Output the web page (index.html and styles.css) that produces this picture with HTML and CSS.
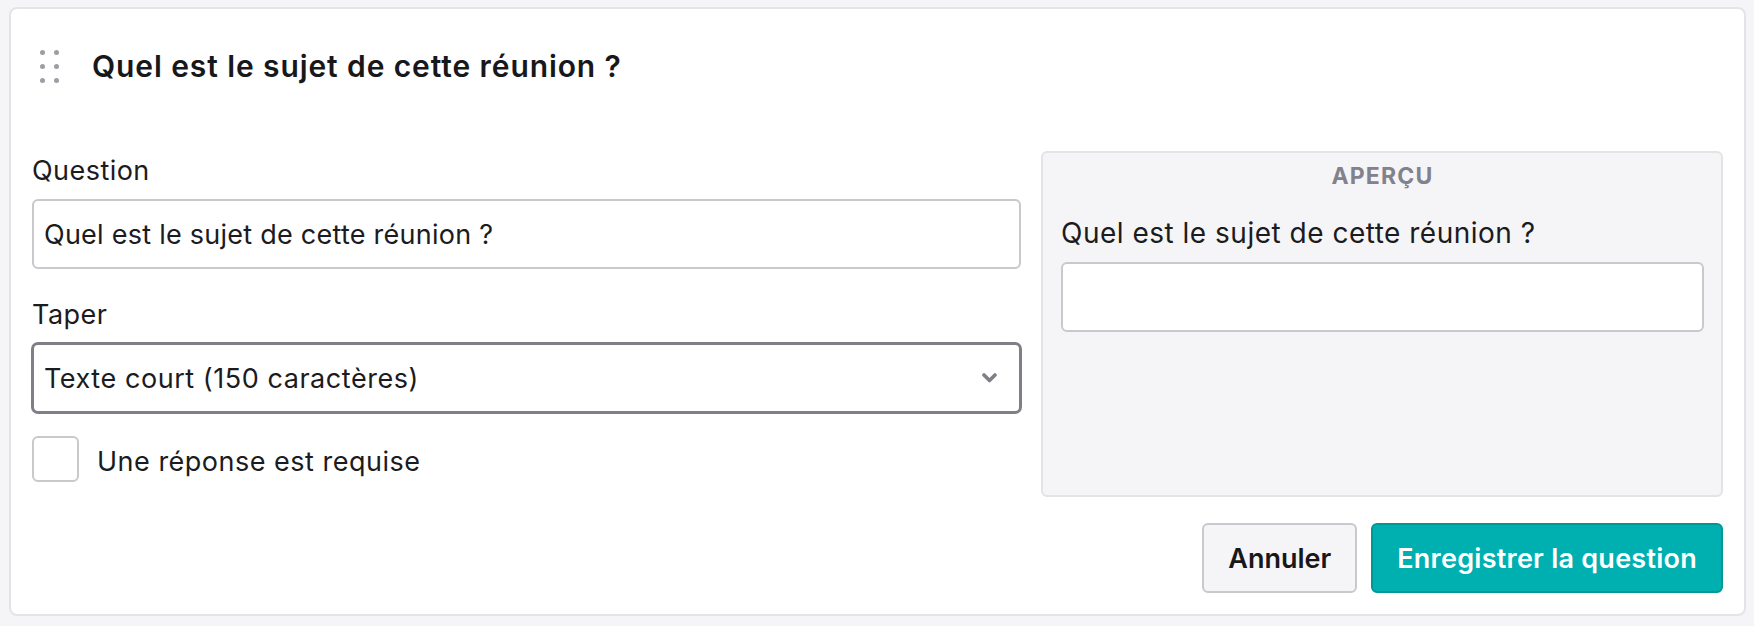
FILE: index.html
```html
<!DOCTYPE html>
<html lang="fr">
<head>
  <meta charset="UTF-8">
  <meta name="viewport" content="width=device-width, initial-scale=1.0">
  <title>Question</title>
  <link rel="stylesheet" href="styles.css">
</head>
<body>
  <div class="card">
    <!-- En-tête de la question -->
    <div class="card-header">
      <svg class="drag-handle" width="19" height="33" viewBox="0 0 19 33">
        <circle cx="2.5" cy="2.5" r="2.5" />
        <circle cx="16.5" cy="2.5" r="2.5" />
        <circle cx="2.5" cy="16.5" r="2.5" />
        <circle cx="16.5" cy="16.5" r="2.5" />
        <circle cx="2.5" cy="30.5" r="2.5" />
        <circle cx="16.5" cy="30.5" r="2.5" />
      </svg>
      <h1>Quel est le sujet de cette réunion ?</h1>
    </div>

    <div class="card-body">
      <!-- Formulaire -->
      <div class="form-col">
        <div class="field">
          <label for="question">Question</label>
          <input type="text" id="question" class="text-input" value="Quel est le sujet de cette réunion ?">
        </div>

        <div class="field field-type">
          <label for="type">Taper</label>
          <div class="select-wrap">
            <select id="type" class="select-input">
              <option>Texte court (150 caractères)</option>
              <option>Texte long</option>
            </select>
            <svg class="select-arrow" width="15" height="10" viewBox="0 0 15 10">
              <path d="M2 2 L7.5 7.5 L13 2" />
            </svg>
          </div>
        </div>

        <label class="check-row">
          <input type="checkbox" class="checkbox">
          <span>Une réponse est requise</span>
        </label>
      </div>

      <!-- Aperçu -->
      <div class="preview">
        <div class="preview-title">Aperçu</div>
        <label class="preview-label" for="preview-answer">Quel est le sujet de cette réunion ?</label>
        <input type="text" id="preview-answer" class="text-input">
      </div>
    </div>

    <div class="card-footer">
      <button class="btn btn-cancel">Annuler</button>
      <button class="btn btn-save">Enregistrer la question</button>
    </div>
  </div>
</body>
</html>
```

FILE: styles.css
```css
* {
  margin: 0;
  padding: 0;
  box-sizing: border-box;
}

body {
  font-family: "Inter", "Liberation Sans", sans-serif;
  background-color: #f5f5f7;
  color: #1b1b20;
  padding: 7px 8px 0 9px;
}

.card {
  background-color: #fff;
  border: 2px solid #e4e4e7;
  border-radius: 8px;
  padding: 39px 21px 21px 21px;
}

.card-header {
  display: flex;
  align-items: center;
  gap: 33px;
  padding-left: 8px;
  height: 36px;
}

.drag-handle {
  fill: #9d9da6;
  flex-shrink: 0;
}

h1 {
  font-size: 30px;
  line-height: 36px;
  font-weight: 600;
  letter-spacing: 0.9px;
  color: #18181b;
}

.card-body {
  display: grid;
  grid-template-columns: 1fr 682px;
  gap: 20px;
  margin-top: 67px;
}

.form-col {
  padding-bottom: 15px;
}

.field label {
  display: block;
  font-size: 27px;
  line-height: 40px;
  letter-spacing: 0.45px;
  margin-bottom: 8px;
}

.field-type {
  margin-top: 26px;
}

.text-input,
.select-input {
  width: 100%;
  height: 70px;
  border: 2px solid #c8c8cd;
  border-radius: 6px;
  background-color: #fff;
  padding: 0 10px;
  font-family: inherit;
  font-size: 27px;
  letter-spacing: 0.25px;
  color: #1b1b20;
  outline: none;
}

.select-wrap {
  position: relative;
}

.select-input {
  appearance: none;
  -webkit-appearance: none;
  letter-spacing: 0.55px;
  border-color: #7f7f88;
  box-shadow: 0 0 0 1px #7f7f88;
}

.select-arrow {
  position: absolute;
  right: 24px;
  top: 30px;
  fill: none;
  stroke: #7f7f88;
  stroke-width: 3.6;
  stroke-linecap: round;
  stroke-linejoin: round;
  pointer-events: none;
}

.check-row {
  display: flex;
  align-items: center;
  gap: 18px;
  margin-top: 23px;
  font-size: 27px;
  line-height: 40px;
  letter-spacing: 0.5px;
}

.checkbox {
  appearance: none;
  -webkit-appearance: none;
  width: 47px;
  height: 46px;
  border: 2px solid #c8c8cd;
  border-radius: 6px;
  background-color: #fff;
}

.check-row span {
  margin-top: 6px;
}

.preview {
  background-color: #f5f5f7;
  border: 2px solid #e4e4e7;
  border-radius: 6px;
  padding: 7px 17px 0 18px;
}

.preview-title {
  text-align: center;
  font-size: 23px;
  line-height: 32px;
  font-weight: 700;
  letter-spacing: 1.2px;
  text-transform: uppercase;
  color: #82828c;
  margin-bottom: 21px;
}

.preview-label {
  display: block;
  font-size: 28px;
  line-height: 40px;
  letter-spacing: 0.5px;
  margin-bottom: 9px;
}

.card-footer {
  display: flex;
  justify-content: flex-end;
  gap: 14px;
  margin-top: 26px;
}

.btn {
  height: 70px;
  padding: 0 24px;
  border-radius: 6px;
  font-family: inherit;
  font-size: 27px;
  font-weight: 600;
  cursor: pointer;
}

.btn-cancel {
  background-color: #f5f5f7;
  border: 2px solid #c8c8cd;
  color: #18181b;
}

.btn-save {
  background-color: #00b0b0;
  border: 2px solid #009797;
  color: #fff;
  letter-spacing: 0.25px;
}

.btn-save:hover {
  background-color: #00a0a0;
}
```
